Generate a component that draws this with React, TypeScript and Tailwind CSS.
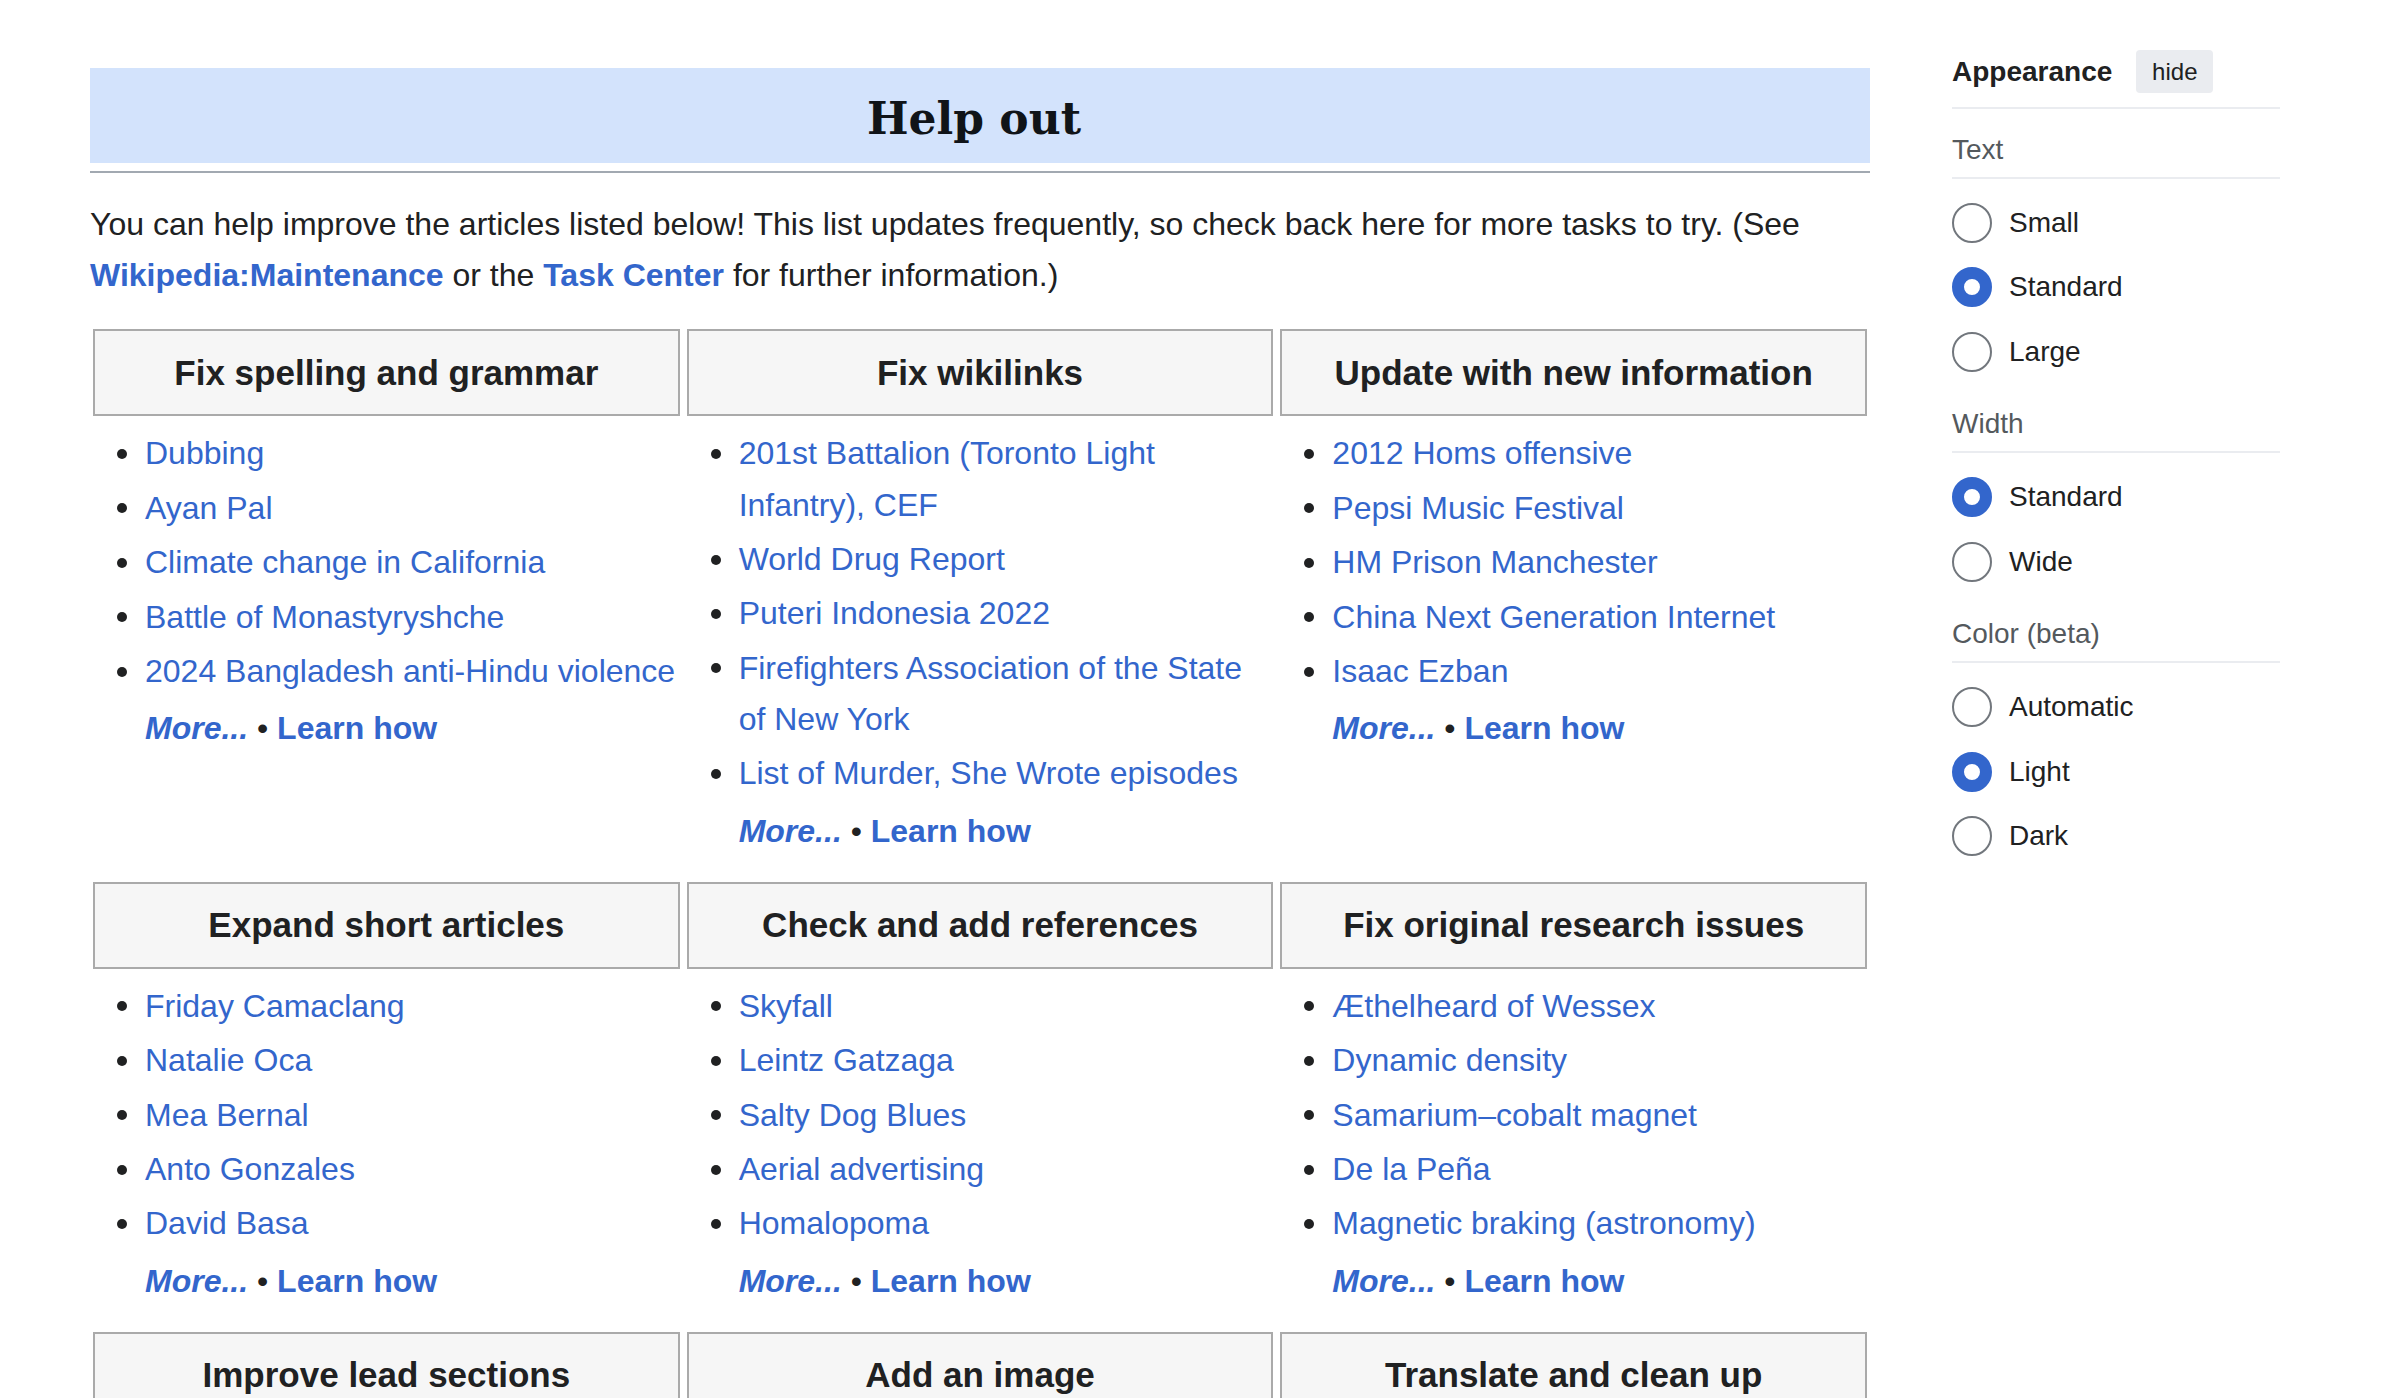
import { Fragment } from "react";

type Section = {
    title: string;
    items: string[];
};

const rows: Section[][] = [
    [
        {
            title: "Fix spelling and grammar",
            items: [
                "Dubbing",
                "Ayan Pal",
                "Climate change in California",
                "Battle of Monastyryshche",
                "2024 Bangladesh anti-Hindu violence",
            ],
        },
        {
            title: "Fix wikilinks",
            items: [
                "201st Battalion (Toronto Light Infantry), CEF",
                "World Drug Report",
                "Puteri Indonesia 2022",
                "Firefighters Association of the State of New York",
                "List of Murder, She Wrote episodes",
            ],
        },
        {
            title: "Update with new information",
            items: [
                "2012 Homs offensive",
                "Pepsi Music Festival",
                "HM Prison Manchester",
                "China Next Generation Internet",
                "Isaac Ezban",
            ],
        },
    ],
    [
        {
            title: "Expand short articles",
            items: ["Friday Camaclang", "Natalie Oca", "Mea Bernal", "Anto Gonzales", "David Basa"],
        },
        {
            title: "Check and add references",
            items: ["Skyfall", "Leintz Gatzaga", "Salty Dog Blues", "Aerial advertising", "Homalopoma"],
        },
        {
            title: "Fix original research issues",
            items: [
                "Æthelheard of Wessex",
                "Dynamic density",
                "Samarium–cobalt magnet",
                "De la Peña",
                "Magnetic braking (astronomy)",
            ],
        },
    ],
    [
        { title: "Improve lead sections", items: [] },
        { title: "Add an image", items: [] },
        { title: "Translate and clean up", items: [] },
    ],
];

const appearance = [
    { label: "Text", options: ["Small", "Standard", "Large"], selected: "Standard" },
    { label: "Width", options: ["Standard", "Wide"], selected: "Standard" },
    { label: "Color (beta)", options: ["Automatic", "Light", "Dark"], selected: "Light" },
];

const SectionHeader = ({ title }: { title: string }) => (
    <div className="h-[87px] border-2 border-[#aaaaaa] bg-[#f6f6f6] flex items-center justify-center text-[35px] font-bold text-[#202122]">
        {title}
    </div>
);

const SectionBody = ({ items }: { items: string[] }) => {
    if (items.length === 0) {
        return <div className="h-[40px]"></div>;
    }
    return (
        <div className="pt-[12px] pb-[25px] text-[32px] leading-[51.2px]">
            <ul className="mb-[6px]">
                {items.map((item) => (
                    <li key={item} className="flex mb-[3.2px]">
                        <span className="w-[52px] shrink-0 h-[51.2px] flex items-center pl-[24px]">
                            <span className="w-[10px] h-[10px] rounded-full bg-[#202122]"></span>
                        </span>
                        <a className="text-[#3366cc]">{item}</a>
                    </li>
                ))}
            </ul>
            <div className="pl-[52px] text-[#202122]">
                <a className="text-[#3366cc] font-bold italic">More...</a> •{" "}
                <a className="text-[#3366cc] font-bold">Learn how</a>
            </div>
        </div>
    );
};

const Radio = ({ label, checked }: { label: string; checked: boolean }) => (
    <div className="flex items-center h-[40px] gap-[17px]">
        {checked ? (
            <span className="w-[40px] h-[40px] rounded-full border-[12px] border-[#3366cc] bg-white shrink-0"></span>
        ) : (
            <span className="w-[40px] h-[40px] rounded-full border-2 border-[#72777d] bg-white shrink-0"></span>
        )}
        <span className="text-[28px] text-[#202122]">{label}</span>
    </div>
);

const Appearance = () => (
    <div className="w-[328px] shrink-0 pt-[50px]">
        <div className="flex items-center h-[43px]">
            <span className="text-[28px] font-bold text-[#202122]">Appearance</span>
            <button className="ml-[24px] h-[43px] w-[77px] rounded-[4px] bg-[#eaecf0] text-[24px] text-[#202122]">
                hide
            </button>
        </div>
        <div className="mt-[14px] h-[2px] bg-[#eaecf0]"></div>
        {appearance.map((group, gi) => (
            <div key={group.label} className={gi === 0 ? "mt-[24.5px]" : "mt-[36.5px]"}>
                <div className="text-[28px] leading-[32px] text-[#54595d]">{group.label}</div>
                <div className="mt-[11px] h-[2px] bg-[#eaecf0]"></div>
                <div className="mt-[24px] flex flex-col gap-[24.5px]">
                    {group.options.map((opt) => (
                        <Radio key={opt} label={opt} checked={opt === group.selected} />
                    ))}
                </div>
            </div>
        ))}
    </div>
);

export default function App() {
    return (
        <div className="min-h-[1398px] bg-white font-['Liberation_Sans',Arial,sans-serif] text-[#202122] flex pl-[90px] gap-[82px]">
            <div className="w-[1780px] shrink-0 pt-[68px]">
                <div className="h-[95px] bg-[#d3e3fc] flex items-center justify-center pt-[7px] pr-[12px]">
                    <h2 className="font-['DejaVu_Serif',Georgia,serif] font-bold text-[44px] text-[#101418]">
                        Help out
                    </h2>
                </div>
                <div className="mt-[8px] h-[2px] bg-[#a2a9b1]"></div>
                <p className="mt-[26px] text-[32px] leading-[51.2px]">
                    You can help improve the articles listed below! This list updates frequently, so check back
                    here for more tasks to try. (See{" "}
                    <a className="text-[#3366cc] font-bold">Wikipedia:Maintenance</a> or the{" "}
                    <a className="text-[#3366cc] font-bold">Task Center</a> for further information.)
                </p>
                <div className="mt-[28px] mx-[3px] grid grid-cols-3 gap-x-[7px]">
                    {rows.map((row, ri) => (
                        <Fragment key={ri}>
                            {row.map((s) => (
                                <SectionHeader key={s.title} title={s.title} />
                            ))}
                            {row.map((s) => (
                                <SectionBody key={s.title + "-body"} items={s.items} />
                            ))}
                        </Fragment>
                    ))}
                </div>
            </div>
            <Appearance />
        </div>
    );
}
